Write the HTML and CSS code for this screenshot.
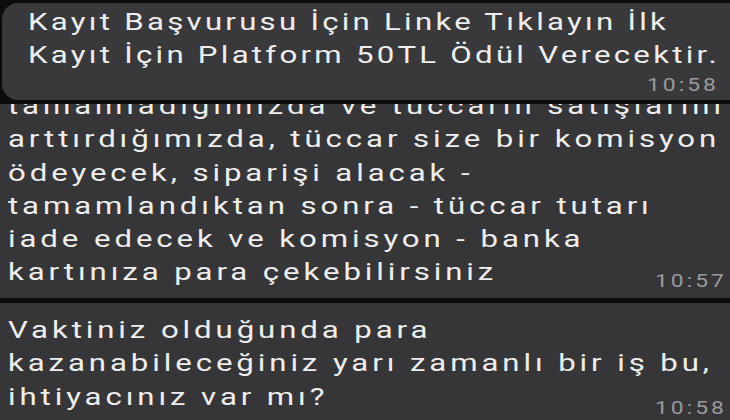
FILE: index.html
```html
<!DOCTYPE html>
<html lang="tr">
<head>
<meta charset="utf-8">
<link rel="stylesheet" href="styles.css">
</head>
<body>
<div class="screen">
  <div class="bubble bubble-top">
    <p class="msg">Kayıt Başvurusu İçin Linke Tıklayın İlk<br>Kayıt İçin Platform 50TL Ödül Verecektir.</p>
    <div class="time"><span>10:58</span></div>
  </div>
  <div class="bubble bubble-mid">
    <p class="msg">tamamladığımızda ve tüccarın satışlarını<br>arttırdığımızda, tüccar size bir komisyon<br>ödeyecek, siparişi alacak -<br>tamamlandıktan sonra - tüccar tutarı<br>iade edecek ve komisyon - banka<br>kartınıza para çekebilirsiniz</p>
    <div class="time"><span>10:57</span></div>
  </div>
  <div class="bubble bubble-bot">
    <p class="msg">Vaktiniz olduğunda para<br>kazanabileceğiniz yarı zamanlı bir iş bu,<br>ihtiyacınız var mı?</p>
    <div class="time"><span>10:58</span></div>
  </div>
</div>
</body>
</html>
```
FILE: styles.css
```css
html, body {
  margin: 0;
  padding: 0;
  background: #0c0c0c;
}
.screen {
  width: 730px;
  height: 420px;
  overflow: hidden;
  display: flex;
  flex-direction: column;
  font-family: Roboto, "Noto Sans", sans-serif;
  color: #eeeeee;
}
.bubble {
  background: #363638;
  overflow: hidden;
}
.msg {
  margin: 0;
  font-size: 24px;
  line-height: 33.3px;
  letter-spacing: 3px;
  white-space: nowrap;
  transform: scaleX(1.3);
  transform-origin: left center;
}
.time {
  font-size: 19px;
  line-height: 22px;
  color: #9a9a9c;
  text-align: right;
}
.time span {
  display: inline-block;
  letter-spacing: 2.5px;
  transform: scaleX(1.2);
  transform-origin: right center;
}
.bubble-top {
  height: 97px;
  margin: 3px 0 0 2px;
  border-radius: 16px 0 0 16px;
  background: #39393b;
  padding: 3px 0 0 26px;
  box-sizing: border-box;
}
.bubble-top .msg {
  letter-spacing: 2.5px;
}
.bubble-top .time {
  margin: 1px 11px 0 0;
}
.bubble-mid {
  margin-top: 4px;
  height: 194px;
  padding-left: 8px;
}
.bubble-mid .msg {
  margin-top: -14px;
}
.bubble-mid .time {
  margin: -20px 3px 0 0;
}
.bubble-bot {
  margin-top: 5px;
  flex: 1;
  padding: 11px 0 0 8px;
}
.bubble-bot .time {
  margin: -17px 3px 0 0;
}
```
